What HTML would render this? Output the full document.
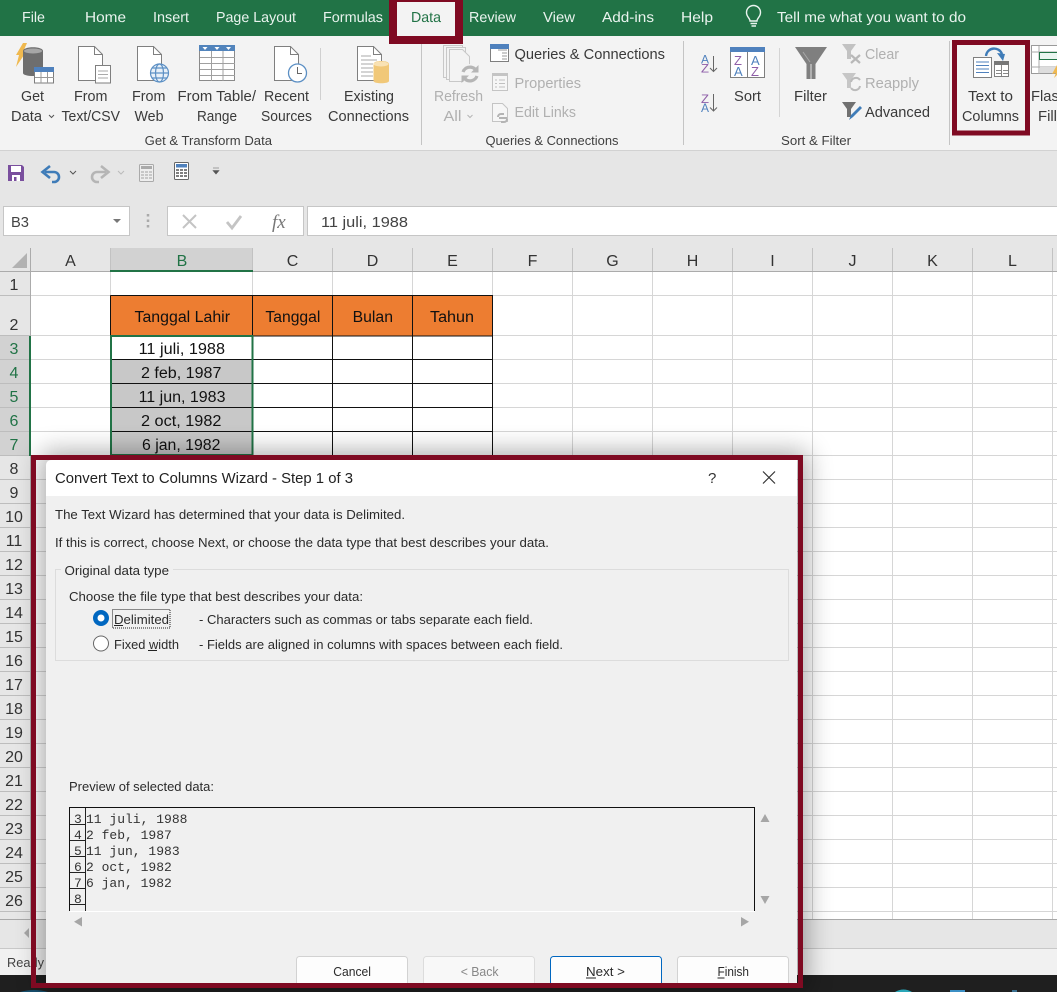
<!DOCTYPE html>
<html lang="en"><head><meta charset="utf-8"><title>Excel Text to Columns</title>
<style>
html,body{margin:0;padding:0;background:#fff;width:1057px;height:992px;overflow:hidden}
svg{display:block;position:absolute;left:0;top:0}
text{font-family:"Liberation Sans",Arial,sans-serif;fill:#262626}
.t{font-size:14.5px;fill:#e9f3ee}
.r{font-size:14.5px;fill:#3a3a3a}
.g{font-size:14.5px;fill:#b0b0b0}
.l{font-size:12.5px;fill:#404040}
.h{font-size:16px;fill:#333;text-anchor:middle}
.n{font-size:16px;fill:#333;text-anchor:middle}
.c{font-size:15.5px;fill:#111}
.d{font-size:12.5px;fill:#2b2b2b}
.m{font-family:"Liberation Mono",monospace;font-size:13px;fill:#333}
</style></head><body>
<svg width="1057" height="992" viewBox="0 0 1057 992" xmlns="http://www.w3.org/2000/svg">
<defs><filter id="b" x="-20%" y="-20%" width="140%" height="140%"><feGaussianBlur stdDeviation="13"/></filter></defs>

<!-- tab bar -->
<rect width="1057" height="37" fill="#217346"/>
<rect y="36" width="1057" height="114" fill="#f3f3f3"/>
<rect y="150" width="1057" height="1.5" fill="#d2d2d2"/>
<rect y="151" width="1057" height="97" fill="#e6e6e6"/>
<rect x="395" y="1" width="62" height="36" fill="#f3f3f3"/>
<g text-rendering="geometricPrecision">
<text class="t" x="22" y="22" textLength="23" lengthAdjust="spacingAndGlyphs">File</text>
<text class="t" x="85" y="22" textLength="41" lengthAdjust="spacingAndGlyphs">Home</text>
<text class="t" x="153" y="22" textLength="36" lengthAdjust="spacingAndGlyphs">Insert</text>
<text class="t" x="216" y="22" textLength="80" lengthAdjust="spacingAndGlyphs">Page Layout</text>
<text class="t" x="323" y="22" textLength="60" lengthAdjust="spacingAndGlyphs">Formulas</text>
<text class="t" x="411" y="22" textLength="30" lengthAdjust="spacingAndGlyphs" style="fill:#217346">Data</text>
<text class="t" x="469" y="22" textLength="47" lengthAdjust="spacingAndGlyphs">Review</text>
<text class="t" x="543" y="22" textLength="32" lengthAdjust="spacingAndGlyphs">View</text>
<text class="t" x="602" y="22" textLength="52" lengthAdjust="spacingAndGlyphs">Add-ins</text>
<text class="t" x="681" y="22" textLength="32" lengthAdjust="spacingAndGlyphs">Help</text>
<text class="t" x="777" y="22" textLength="189" lengthAdjust="spacingAndGlyphs">Tell me what you want to do</text>
</g>
<g fill="none" stroke="#eaf4ef" stroke-width="1.4"><path d="M750 21c0-3-3.500-4-3.500-8.500a7 7 0 0 1 14 0c0 4.500-3.500 5.500-3.500 8.500z"/><path d="M750.500 23.500h6.500M751.500 26h4.500"/></g>

<!-- Get Data icon -->
<path d="M23 43h4l-4 9h3l-10 15 3-12h-3z" fill="#f0b94f"/>
<path d="M23 51c0-5 20-5 20 0v22c0 4-20 4-20 0z" fill="#6e6e6e"/><ellipse cx="33" cy="51" rx="9" ry="2.500" fill="#a6a6a6"/>
<rect x="34.500" y="67.500" width="19" height="15.500" fill="#fff" stroke="#7d7d7d"/><rect x="34" y="67" width="20" height="5" fill="#4f81bd"/>
<path d="M41 72v11M47.500 72v11M35 77.500h19" stroke="#999" fill="none"/>
<!-- doc icons -->
<g fill="#fff" stroke="#7f7f7f">
<path d="M78.500 46.500h16l8 8v26h-24z"/><path d="M94.500 46.500v8h8" fill="none"/>
<rect x="95.500" y="65.500" width="15" height="17.500"/>
<path d="M98 71h10M98 74.500h10M98 78h10" fill="none" stroke="#aaa"/>
<path d="M137.500 46.500h16l8 8v26h-24z"/><path d="M153.500 46.500v8h8" fill="none"/>
<path d="M274.500 46.500h16l8 8v26h-24z"/><path d="M290.500 46.500v8h8" fill="none"/>
<path d="M357.500 46.500h16l8 8v26h-24z"/><path d="M373.500 46.500v8h8" fill="none"/>
</g>
<path d="M361 56h10M361 60h16M361 64h12M361 68h12M361 72h12M361 76h12" stroke="#a8a8a8" fill="none"/>
<g fill="#e8f0f8" stroke="#5b8fc4" stroke-width="1.200"><circle cx="159.500" cy="73" r="9"/><ellipse cx="159.500" cy="73" rx="4" ry="9" fill="none"/><path d="M150.500 73h18M152 68h15M152 78h15" fill="none"/></g>
<circle cx="297.500" cy="73" r="9" fill="#fff" stroke="#5b8fc4" stroke-width="1.300"/><path d="M297.500 67v6.500h4.500" fill="none" stroke="#666"/>
<path d="M373.500 64c0-4 15.500-4 15.500 0v17c0 3-15.500 3-15.500 0z" fill="#f1c878"/><ellipse cx="381" cy="64" rx="7.500" ry="2.500" fill="#f9e2b4"/>
<!-- From table -->
<rect x="199.500" y="45.500" width="35" height="35" fill="#fff" stroke="#8a8a8a"/><rect x="199" y="45" width="36" height="6" fill="#5284bc"/>
<path d="M211.500 51v30M223 51v30M200 57.500h35M200 63.500h35M200 69.500h35M200 75.500h35" stroke="#a0a0a0" fill="none"/>
<path d="M202.500 47h5l-2.500 3zM214.500 47h5l-2.500 3zM226 47h5l-2.500 3z" fill="#fff"/>
<rect x="320" y="48" width="1" height="52" fill="#d0d0d0"/>
<rect x="421" y="44" width="1" height="101" fill="#c4c4c4"/>
<rect x="683" y="41" width="1" height="104" fill="#c4c4c4"/>
<rect x="779" y="48" width="1" height="69" fill="#d4d4d4"/>
<rect x="949" y="41" width="1" height="104" fill="#c4c4c4"/>
<!-- refresh -->
<g fill="#f3f3f3" stroke="#c8c8c8"><rect x="443.500" y="45.500" width="19" height="32"/><rect x="446.500" y="47.500" width="19" height="32"/><path d="M449.500 49.500h13l7 7v25h-20z"/></g>
<circle cx="470" cy="74" r="10" fill="#f3f3f3"/>
<g fill="none" stroke="#b5b5b5" stroke-width="3.200"><path d="M463 72a7.500 7.500 0 0 1 12-3"/><path d="M477 76a7.500 7.500 0 0 1-12 3"/></g><path d="M478.500 65v7.500h-7.500zM461.500 83v-7.500h7.500z" fill="#b5b5b5"/>
<!-- queries icons -->
<rect x="490.500" y="44.500" width="18" height="17" fill="#fff" stroke="#7f7f7f"/><rect x="490" y="44" width="19" height="5" fill="#4f81bd"/><path d="M502 53h5M502 56h5M502 59h5M498 50h9" stroke="#999" fill="none"/>
<rect x="492.500" y="73.500" width="15" height="17" fill="#f6f6f6" stroke="#c4c4c4"/><rect x="492" y="73" width="16" height="3" fill="#c4c4c4"/><path d="M495 80h2M499 80h6M495 83.500h2M499 83.500h6M495 87h2M499 87h6" stroke="#c0c0c0" fill="none"/>
<path d="M492.500 103.500h10l5 5v13h-15z" fill="#f6f6f6" stroke="#c4c4c4"/><path d="M498 117a3 3 0 0 1 3-3h3M507 119a3 3 0 0 1-3 3h-3M499 118h8" stroke="#b4b4b4" stroke-width="2" fill="none"/>
<text class="r" x="514.500" y="59" textLength="150.500" lengthAdjust="spacingAndGlyphs">Queries &amp; Connections</text>
<text class="g" x="514.500" y="88" textLength="66.500" lengthAdjust="spacingAndGlyphs">Properties</text>
<text class="g" x="514.500" y="117" textLength="61.500" lengthAdjust="spacingAndGlyphs">Edit Links</text>

<!-- ribbon labels -->
<text class="r" x="21" y="101" textLength="23" lengthAdjust="spacingAndGlyphs">Get</text>
<text class="r" x="11" y="121" textLength="31" lengthAdjust="spacingAndGlyphs">Data</text>
<path d="M49 115l2.500 2.500 2.500-2.500" fill="none" stroke="#555"/>
<text class="r" x="74" y="101" textLength="33.500" lengthAdjust="spacingAndGlyphs">From</text>
<text class="r" x="61.500" y="121" textLength="58.500" lengthAdjust="spacingAndGlyphs">Text/CSV</text>
<text class="r" x="132" y="101" textLength="33.500" lengthAdjust="spacingAndGlyphs">From</text>
<text class="r" x="134.500" y="121" textLength="29" lengthAdjust="spacingAndGlyphs">Web</text>
<text class="r" x="177.500" y="101" textLength="78.500" lengthAdjust="spacingAndGlyphs">From Table/</text>
<text class="r" x="197" y="121" textLength="40" lengthAdjust="spacingAndGlyphs">Range</text>
<text class="r" x="264" y="101" textLength="45" lengthAdjust="spacingAndGlyphs">Recent</text>
<text class="r" x="261" y="121" textLength="51" lengthAdjust="spacingAndGlyphs">Sources</text>
<text class="r" x="344" y="101" textLength="50" lengthAdjust="spacingAndGlyphs">Existing</text>
<text class="r" x="328" y="121" textLength="81" lengthAdjust="spacingAndGlyphs">Connections</text>
<text class="g" x="434" y="101" textLength="49" lengthAdjust="spacingAndGlyphs">Refresh</text>
<text class="g" x="443.500" y="121" textLength="18" lengthAdjust="spacingAndGlyphs">All</text>
<path d="M467.500 115l2.500 2.500 2.500-2.500" fill="none" stroke="#b5b5b5"/>
<text class="l" x="144.700" y="145" textLength="127.300" lengthAdjust="spacingAndGlyphs">Get &amp; Transform Data</text>
<text class="l" x="485.500" y="145" textLength="133" lengthAdjust="spacingAndGlyphs">Queries &amp; Connections</text>
<text class="l" x="781" y="145" textLength="70" lengthAdjust="spacingAndGlyphs">Sort &amp; Filter</text>

<!-- sort -->
<text x="701" y="63.500" style="font-size:11.500px;fill:#4f81bd" textLength="8" lengthAdjust="spacingAndGlyphs">A</text>
<text x="701" y="72.500" style="font-size:11.500px;fill:#8e5ea8" textLength="8" lengthAdjust="spacingAndGlyphs">Z</text>
<text x="701" y="103" style="font-size:11.500px;fill:#8e5ea8" textLength="8" lengthAdjust="spacingAndGlyphs">Z</text>
<text x="701" y="112" style="font-size:11.500px;fill:#4f81bd" textLength="8" lengthAdjust="spacingAndGlyphs">A</text>
<path d="M713.500 56v15.500m-3.500-3.500l3.500 3.500 3.500-3.500M713.500 94v17m-3.500-3.500l3.500 3.500 3.500-3.500" fill="none" stroke="#666"/>
<rect x="730.500" y="47.500" width="34" height="30" fill="#fff" stroke="#7f7f7f"/><rect x="730" y="47" width="35" height="5" fill="#4f81bd"/><path d="M747.500 52v26" stroke="#7f7f7f"/>
<text x="734" y="65" style="font-size:13px;fill:#8e5ea8">Z</text><text x="734" y="76" style="font-size:13px;fill:#4f81bd">A</text>
<text x="751" y="65" style="font-size:13px;fill:#4f81bd">A</text><text x="751" y="76" style="font-size:13px;fill:#8e5ea8">Z</text>
<text class="r" x="734" y="101" textLength="27" lengthAdjust="spacingAndGlyphs">Sort</text>
<path d="M795 47h32l-11.500 17v15h-9v-15z" fill="#7f7f7f"/><path d="M810 62l-7-10" stroke="#a8a8a8" fill="none"/><path d="M811 64v15" stroke="#b0b0b0" fill="none" stroke-width="2"/>
<text class="r" x="794" y="101" textLength="33" lengthAdjust="spacingAndGlyphs">Filter</text>
<path d="M842 44h14l-5 7v8h-4v-8z" fill="#c2c2c2"/><path d="M851 55l9 8m0-8l-9 8" stroke="#b8b8b8" stroke-width="2.200" fill="none"/>
<path d="M842 73h14l-5 7v8h-4v-8z" fill="#c6c6c6"/><path d="M851 82a5 5 0 0 1 9-2M860 86a5 5 0 0 1-9 2" fill="none" stroke="#bbb" stroke-width="2"/>
<path d="M842 102h14l-5 7v8h-4v-8z" fill="#707070"/><path d="M849 120l2-5 9-9 2 2-9 9z" fill="#3f7cb8"/>
<text class="g" x="865" y="59" textLength="34" lengthAdjust="spacingAndGlyphs">Clear</text>
<text class="g" x="865" y="88" textLength="54" lengthAdjust="spacingAndGlyphs">Reapply</text>
<text class="r" x="865" y="117" textLength="65" lengthAdjust="spacingAndGlyphs">Advanced</text>

<!-- text to columns icon -->
<rect x="973.500" y="57.500" width="18" height="20" fill="#fff" stroke="#7f7f7f"/><path d="M976 62h13M976 65.500h13M976 69h13M976 72.500h13" stroke="#4f81bd" fill="none"/>
<rect x="994.500" y="61.500" width="14" height="15" fill="#fff" stroke="#7f7f7f"/><rect x="994" y="61" width="15" height="4" fill="#777"/><path d="M1001.500 65v11M996 70.500h5M1003 70.500h5M996 73.500h5M1003 73.500h5" stroke="#888" fill="none"/>
<path d="M986 56c1-9 13-10 16-2" fill="none" stroke="#3f7cb8" stroke-width="2.400"/><path d="M997 53l8 1-2 7z" fill="#3f7cb8"/>
<text class="r" x="968" y="101" textLength="45" lengthAdjust="spacingAndGlyphs">Text to</text>
<text class="r" x="962" y="121" textLength="57" lengthAdjust="spacingAndGlyphs">Columns</text>
<!-- flash fill -->
<rect x="1031.500" y="45.500" width="30" height="28" fill="#fff" stroke="#9a9a9a"/><path d="M1031 52h26M1031 67h26M1039 46v28" stroke="#aaa"/><rect x="1039.500" y="52.500" width="20" height="7" fill="#eaf5f0" stroke="#217346"/><rect x="1040" y="67" width="17" height="6" fill="#ddd"/><path d="M1057 65l-5 9 4-1-2 5 3-3z" fill="#f0b94f"/>
<text class="r" x="1031" y="101" textLength="36" lengthAdjust="spacingAndGlyphs">Flash</text>
<text class="r" x="1038" y="121" textLength="19" lengthAdjust="spacingAndGlyphs">Fill</text>

<!-- QAT -->
<path d="M8 165h14l2 2v14h-16z" fill="#7a4f9e"/><rect x="11" y="166" width="10" height="6" fill="#fff"/><rect x="12" y="175" width="8" height="6" fill="#fff"/><rect x="14" y="177" width="2.500" height="4" fill="#7a4f9e"/>
<path d="M45 172h9a5 5 0 0 1 0 10h-2" fill="none" stroke="#3f7cb8" stroke-width="2.600"/><path d="M50 166l-7.500 6 7.500 6" fill="none" stroke="#3f7cb8" stroke-width="2.600"/>
<path d="M70 171l3 3 3-3" fill="none" stroke="#555"/>
<path d="M106 172h-9a5 5 0 0 0 0 10h2" fill="none" stroke="#b5b5b5" stroke-width="2.600"/><path d="M101 166l7.500 6-7.500 6" fill="none" stroke="#b5b5b5" stroke-width="2.600"/>
<path d="M118 171l3 3 3-3" fill="none" stroke="#bbb"/>
<rect x="139.500" y="164.500" width="14" height="17" rx="1" fill="#eee" stroke="#aaa"/><rect x="141" y="166" width="11" height="3" fill="#aaa"/><path d="M141 172h11M141 175h11M141 178h11" stroke="#bbb" stroke-width="1.500" stroke-dasharray="3 1"/>
<rect x="174.500" y="162.500" width="14" height="17" rx="1" fill="#fff" stroke="#666"/><rect x="176" y="164" width="11" height="3.500" fill="#4f81bd"/><path d="M176 170h11M176 173h11M176 176h11" stroke="#555" stroke-width="1.600" stroke-dasharray="3 1"/>
<path d="M213 168h6M213 170.500h6l-3 3.500z" fill="#555" stroke="#555" stroke-width=".6"/>

<!-- formula bar -->
<rect x="3.500" y="206.500" width="126" height="29" fill="#fff" stroke="#c6c6c6"/>
<text x="11" y="227" style="font-size:15px;fill:#444" textLength="18" lengthAdjust="spacingAndGlyphs">B3</text>
<path d="M113 219h8l-4 4z" fill="#777"/>
<path d="M148 214v2.500M148 219.500v2.500M148 225v2.500" stroke="#aaa" stroke-width="2.500"/>
<rect x="167.500" y="206.500" width="136" height="29" fill="#fff" stroke="#c6c6c6"/>
<path d="M183 215l13 13m0-13l-13 13" stroke="#c4c4c4" stroke-width="2" fill="none"/>
<path d="M227 222l5 6 9-12" stroke="#c4c4c4" stroke-width="2.800" fill="none"/>
<text x="272" y="228" style="font-family:'Liberation Serif',serif;font-style:italic;font-size:19px;fill:#777">fx</text>
<rect x="307.500" y="206.500" width="760" height="29" fill="#fff" stroke="#c6c6c6"/>
<text x="321" y="227" style="font-size:15px;fill:#444" textLength="87" lengthAdjust="spacingAndGlyphs">11 juli, 1988</text>

<!-- sheet -->
<rect y="248" width="1057" height="671" fill="#fff"/>
<rect y="248" width="1057" height="24" fill="#e6e6e6"/>
<rect y="248" width="31" height="671" fill="#e6e6e6"/>
<path d="M27 253v15H12z" fill="#b2b2b2"/>
<rect x="110" y="248" width="143" height="23" fill="#d2d2d2"/>
<rect x="0" y="336" width="30" height="120" fill="#d2d2d2"/>
<path d="M0 271.500H1057M30.500 248V919" stroke="#ababab" fill="none"/>
<path d="M110.500 248v23M252.500 248v23M332.500 248v23M412.500 248v23M492.500 248v23M572.500 248v23M652.500 248v23M732.500 248v23M812.500 248v23M892.500 248v23M972.500 248v23M1052.500 248v23" stroke="#c2c2c2" fill="none"/>
<path d="M110.500 272V919M252.500 272V919M332.500 272V919M412.500 272V919M492.500 272V919M572.500 272V919M652.500 272V919M732.500 272V919M812.500 272V919M892.500 272V919M972.500 272V919M1052.500 272V919" stroke="#d6d6d6" fill="none"/>
<path d="M31 295.500H1057M31 335.500H1057M31 359.500H1057M31 383.500H1057M31 407.500H1057M31 431.500H1057M31 455.500H1057M31 479.500H1057M31 503.500H1057M31 527.500H1057M31 551.500H1057M31 575.500H1057M31 599.500H1057M31 623.500H1057M31 647.500H1057M31 671.500H1057M31 695.500H1057M31 719.500H1057M31 743.500H1057M31 767.500H1057M31 791.500H1057M31 815.500H1057M31 839.500H1057M31 863.500H1057M31 887.500H1057M31 911.500H1057" stroke="#d6d6d6" fill="none"/>
<path d="M0 295.500H30M0 335.500H30M0 359.500H30M0 383.500H30M0 407.500H30M0 431.500H30M0 455.500H30M0 479.500H30M0 503.500H30M0 527.500H30M0 551.500H30M0 575.500H30M0 599.500H30M0 623.500H30M0 647.500H30M0 671.500H30M0 695.500H30M0 719.500H30M0 743.500H30M0 767.500H30M0 791.500H30M0 815.500H30M0 839.500H30M0 863.500H30M0 887.500H30M0 911.500H30" stroke="#bdbdbd" fill="none"/>
<text class="h" x="70.500" y="266">A</text><text class="h" x="182" y="266" style="fill:#217346">B</text><text class="h" x="292.500" y="266">C</text><text class="h" x="372.500" y="266">D</text><text class="h" x="452.500" y="266">E</text><text class="h" x="532.500" y="266">F</text><text class="h" x="612.500" y="266">G</text><text class="h" x="692.500" y="266">H</text><text class="h" x="772.500" y="266">I</text><text class="h" x="852.500" y="266">J</text><text class="h" x="932.500" y="266">K</text><text class="h" x="1012.500" y="266">L</text>
<text class="n" x="14" y="290">1</text><text class="n" x="14" y="330">2</text>
<text class="n" x="14" y="354" style="fill:#217346">3</text><text class="n" x="14" y="378" style="fill:#217346">4</text><text class="n" x="14" y="402" style="fill:#217346">5</text><text class="n" x="14" y="426" style="fill:#217346">6</text><text class="n" x="14" y="450" style="fill:#217346">7</text>
<text class="n" x="14" y="474">8</text><text class="n" x="14" y="498">9</text><text class="n" x="14" y="522">10</text><text class="n" x="14" y="546">11</text><text class="n" x="14" y="570">12</text><text class="n" x="14" y="594">13</text><text class="n" x="14" y="618">14</text><text class="n" x="14" y="642">15</text><text class="n" x="14" y="666">16</text><text class="n" x="14" y="690">17</text><text class="n" x="14" y="714">18</text><text class="n" x="14" y="738">19</text><text class="n" x="14" y="762">20</text><text class="n" x="14" y="786">21</text><text class="n" x="14" y="810">22</text><text class="n" x="14" y="834">23</text><text class="n" x="14" y="858">24</text><text class="n" x="14" y="882">25</text><text class="n" x="14" y="906">26</text>

<!-- table -->
<rect x="110" y="295" width="383" height="41" fill="#ed7d31"/>
<rect x="111" y="360" width="141" height="96" fill="#c8c8c8"/>
<path d="M110.500 295.500H492.500V456M110.500 295.500V336H492.500M252.500 295.500V456M332.500 295.500V456M412.500 295.500V456M253 359.500H492.500M253 383.500H492.500M253 407.500H492.500M253 431.500H492.500M111 359.500H252M111 383.500H252M111 407.500H252M111 431.500H252" stroke="#111" fill="none"/>
<path d="M111 336H252.500V455H111z" fill="none" stroke="#217346" stroke-width="2"/>
<rect x="29" y="336" width="2" height="120" fill="#217346"/>
<rect x="110" y="270" width="143" height="2" fill="#217346"/>
<text class="c" x="134.500" y="322" textLength="95.500" lengthAdjust="spacingAndGlyphs">Tanggal Lahir</text>
<text class="c" x="265.400" y="322" textLength="55" lengthAdjust="spacingAndGlyphs">Tanggal</text>
<text class="c" x="352.600" y="322" textLength="40.400" lengthAdjust="spacingAndGlyphs">Bulan</text>
<text class="c" x="430" y="322" textLength="44" lengthAdjust="spacingAndGlyphs">Tahun</text>
<text class="c" x="138.600" y="354" textLength="86.400" lengthAdjust="spacingAndGlyphs">11 juli, 1988</text>
<text class="c" x="141" y="378" textLength="80.400" lengthAdjust="spacingAndGlyphs">2 feb, 1987</text>
<text class="c" x="138.600" y="402" textLength="86.900" lengthAdjust="spacingAndGlyphs">11 jun, 1983</text>
<text class="c" x="141" y="426" textLength="80.400" lengthAdjust="spacingAndGlyphs">2 oct, 1982</text>
<text class="c" x="142" y="450" textLength="78.400" lengthAdjust="spacingAndGlyphs">6 jan, 1982</text>

<!-- bottom bars -->
<rect y="919" width="1057" height="30" fill="#e6e6e6"/>
<rect y="919" width="1057" height="1" fill="#a8a8a8"/>
<rect y="948" width="1057" height="1" fill="#c8c8c8"/>
<rect y="949" width="1057" height="26" fill="#f1f1f1"/>
<path d="M29 928v10l-5-5z" fill="#a6a6a6"/>
<text x="7" y="967" style="font-size:13px;fill:#444" textLength="37" lengthAdjust="spacingAndGlyphs">Ready</text>
<rect y="975" width="1057" height="17" fill="#1f1f1f"/>
<path d="M20 992q14-4 28 0z" fill="#17506f"/>
<path d="M895 992q8.500-5 17 0z" fill="#2aa6b8"/>
<rect x="950" y="990" width="15" height="2" fill="#3b8fc4"/>
<rect x="1012" y="990" width="5" height="2" fill="#3a6f8f"/>

<!-- dialog shadow -->
<rect x="42" y="452" width="765" height="540" fill="#000" opacity=".34" filter="url(#b)"/>

<!-- dialog -->
<path d="M52 460H797V983H46V466q0-6 6-6z" fill="#f0f0f0"/>
<path d="M52 460H797V496H46V466q0-6 6-6z" fill="#fff"/>
<text x="55" y="483" style="font-size:14.500px;fill:#222" textLength="298" lengthAdjust="spacingAndGlyphs">Convert Text to Columns Wizard - Step 1 of 3</text>
<text x="708" y="483" style="font-size:15px;fill:#333">?</text>
<path d="M763 471.500l12 12m0-12l-12 12" stroke="#333" stroke-width="1.200" fill="none"/>
<text class="d" x="55" y="519" textLength="350" lengthAdjust="spacingAndGlyphs">The Text Wizard has determined that your data is Delimited.</text>
<text class="d" x="55" y="547" textLength="494" lengthAdjust="spacingAndGlyphs">If this is correct, choose Next, or choose the data type that best describes your data.</text>
<rect x="55.500" y="569.500" width="733" height="91" fill="none" stroke="#dcdcdc"/>
<rect x="61" y="563" width="112" height="12" fill="#f0f0f0"/>
<text class="d" x="64.500" y="575" textLength="104.500" lengthAdjust="spacingAndGlyphs">Original data type</text>
<text class="d" x="69" y="601" textLength="294" lengthAdjust="spacingAndGlyphs">Choose the file type that best describes your data:</text>
<circle cx="101" cy="618" r="8" fill="#0067c0"/><circle cx="101" cy="618" r="3.500" fill="#fff"/>
<circle cx="101" cy="643.500" r="7.500" fill="#fff" stroke="#666"/>
<rect x="112.500" y="609.500" width="57.500" height="18.500" fill="none" stroke="#222" stroke-dasharray="1 1"/>
<text class="d" x="114" y="624" textLength="55" lengthAdjust="spacingAndGlyphs">Delimited</text>
<path d="M114 625.500h9" stroke="#222"/>
<text class="d" x="199" y="624" textLength="334" lengthAdjust="spacingAndGlyphs">- Characters such as commas or tabs separate each field.</text>
<text class="d" x="114" y="649" textLength="65" lengthAdjust="spacingAndGlyphs">Fixed width</text>
<path d="M148 650.500h9" stroke="#222"/>
<text class="d" x="199" y="649" textLength="364" lengthAdjust="spacingAndGlyphs">- Fields are aligned in columns with spaces between each field.</text>
<text class="d" x="69" y="791" textLength="145" lengthAdjust="spacingAndGlyphs">Preview of selected data:</text>

<!-- preview -->
<path d="M69.500 911V807.500H754.500V911" fill="none" stroke="#111"/>
<rect x="70" y="911" width="685" height="1" fill="#fff"/>
<path d="M85.500 808V911M70 824.500H85.500M70 840.500H85.500M70 856.500H85.500M70 872.500H85.500M70 888.500H85.500M70 904.500H85.500" stroke="#222" fill="none"/>
<text class="m" x="74" y="823">3</text><text class="m" x="74" y="839">4</text><text class="m" x="74" y="855">5</text><text class="m" x="74" y="871">6</text><text class="m" x="74" y="887">7</text><text class="m" x="74" y="903">8</text>
<text class="m" x="86" y="823">11 juli, 1988</text><text class="m" x="86" y="839">2 feb, 1987</text><text class="m" x="86" y="855">11 jun, 1983</text><text class="m" x="86" y="871">2 oct, 1982</text><text class="m" x="86" y="887">6 jan, 1982</text>
<path d="M760.500 822l4.500-8 4.500 8zM760.500 896l4.500 8 4.500-8zM82 917v9.500l-8-4.750zM741 917v9.500l8-4.750z" fill="#a6a6a6"/>

<!-- buttons -->
<rect x="296.500" y="956.500" width="111" height="29" rx="3" fill="#fdfdfd" stroke="#d2d2d2"/>
<rect x="423.500" y="956.500" width="111" height="29" rx="3" fill="#f8f8f8" stroke="#dcdcdc"/>
<rect x="550.500" y="956.500" width="111" height="29" rx="3" fill="#fdfdfd" stroke="#0067c0"/>
<rect x="677.500" y="956.500" width="111" height="29" rx="3" fill="#fdfdfd" stroke="#d2d2d2"/>
<text class="d" x="333.300" y="976" textLength="37.700" lengthAdjust="spacingAndGlyphs">Cancel</text>
<text class="d" x="460.700" y="976" textLength="37.800" lengthAdjust="spacingAndGlyphs" style="fill:#888">&lt; Back</text>
<text class="d" x="586" y="976" textLength="39" lengthAdjust="spacingAndGlyphs">Next &gt;</text>
<path d="M586 978h10" stroke="#222"/>
<text class="d" x="717.500" y="976" textLength="31.500" lengthAdjust="spacingAndGlyphs">Finish</text>
<path d="M717.500 978h7" stroke="#222"/>

<!-- red highlight frames -->
<rect x="33.500" y="457.500" width="767" height="528" fill="none" stroke="#7f0a22" stroke-width="5"/>
<path d="M393 0V40H459V0" fill="none" stroke="#7f0a22" stroke-width="8"/>
<rect x="389" y="0" width="74" height="2" fill="#7f0a22"/>
<rect x="954.500" y="42.500" width="73" height="90.500" fill="none" stroke="#7f0a22" stroke-width="5"/>
</svg>
</body></html>
